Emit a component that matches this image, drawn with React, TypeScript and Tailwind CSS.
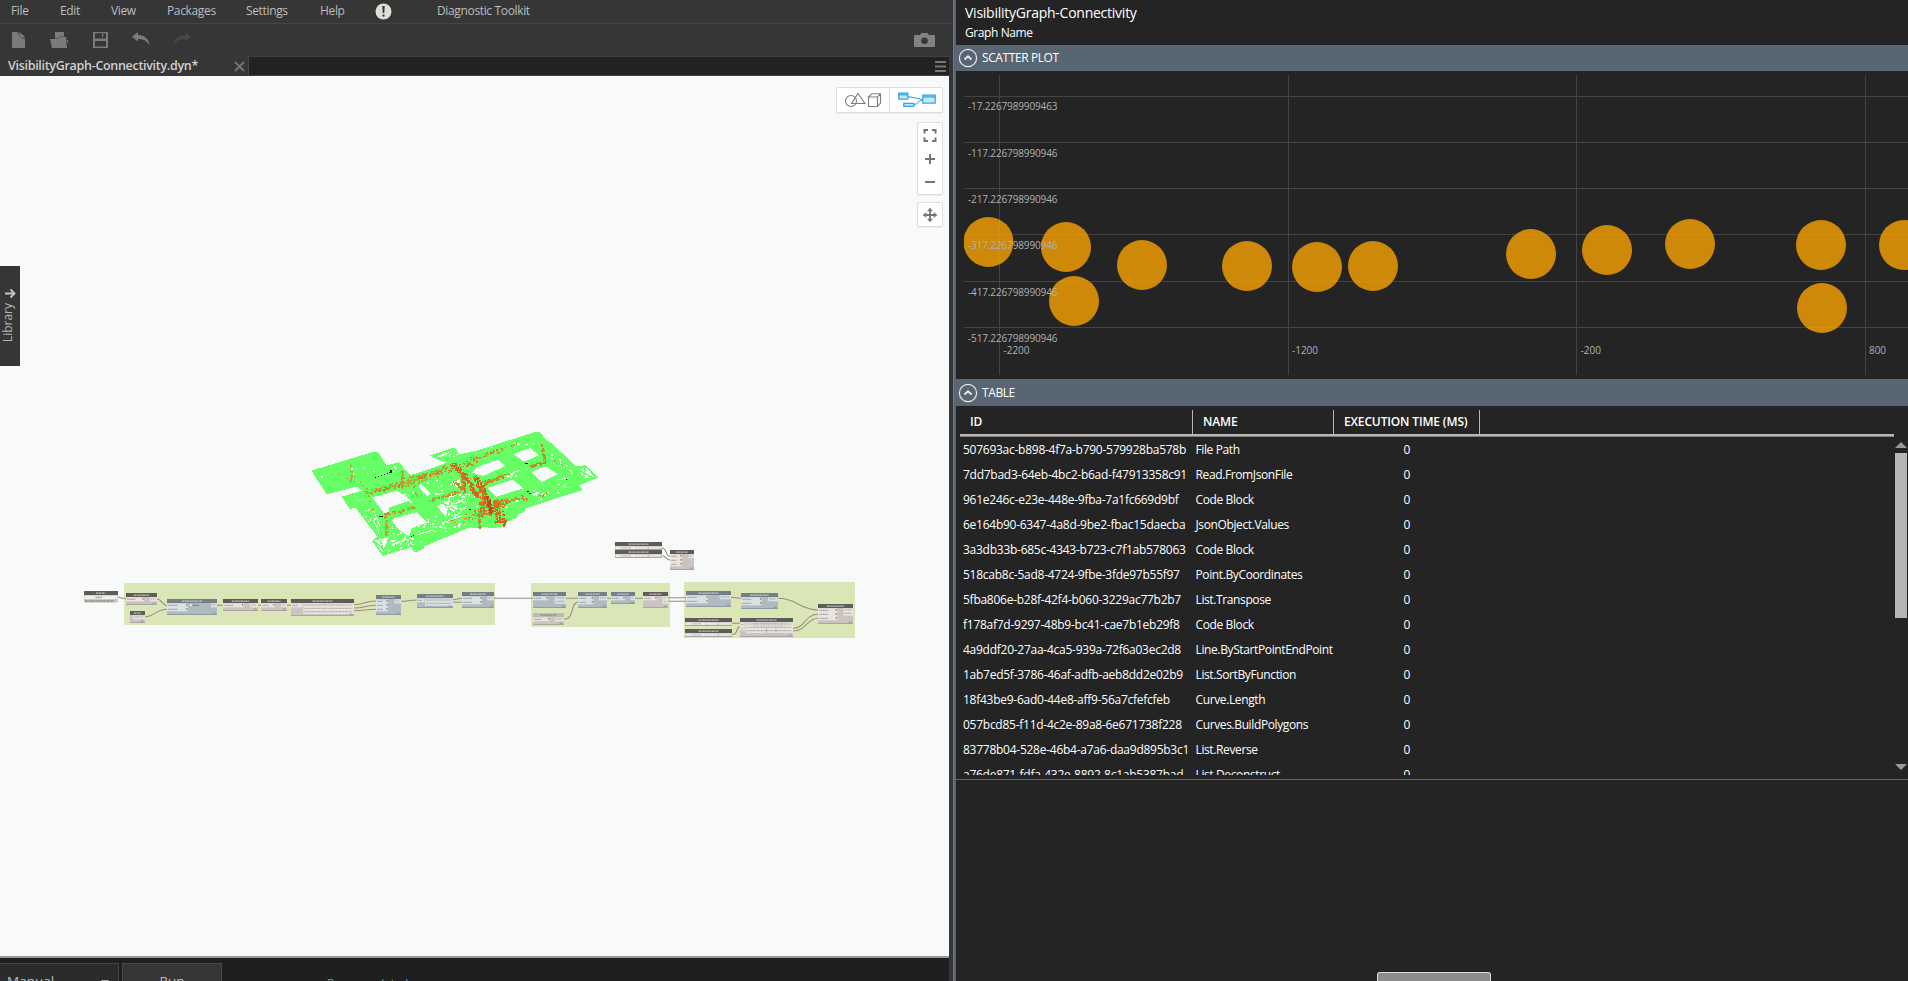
import React from "react";

const MENU = [
  { label: "File", cls: "w-[49px]" },
  { label: "Edit", cls: "w-[51px]" },
  { label: "View", cls: "w-[56px]" },
  { label: "Packages", cls: "w-[79px]" },
  { label: "Settings", cls: "w-[74px]" },
  { label: "Help", cls: "w-[55px]" },
];

const ROWS: [string, string][] = [
  ["507693ac-b898-4f7a-b790-579928ba578b", "File Path"],
  ["7dd7bad3-64eb-4bc2-b6ad-f47913358c91", "Read.FromJsonFile"],
  ["961e246c-e23e-448e-9fba-7a1fc669d9bf", "Code Block"],
  ["6e164b90-6347-4a8d-9be2-fbac15daecba", "JsonObject.Values"],
  ["3a3db33b-685c-4343-b723-c7f1ab578063", "Code Block"],
  ["518cab8c-5ad8-4724-9fbe-3fde97b55f97", "Point.ByCoordinates"],
  ["5fba806e-b28f-42f4-b060-3229ac77b2b7", "List.Transpose"],
  ["f178af7d-9297-48b9-bc41-cae7b1eb29f8", "Code Block"],
  ["4a9ddf20-27aa-4ca5-939a-72f6a03ec2d8", "Line.ByStartPointEndPoint"],
  ["1ab7ed5f-3786-46af-adfb-aeb8dd2e02b9", "List.SortByFunction"],
  ["18f43be9-6ad0-44e8-aff9-56a7cfefcfeb", "Curve.Length"],
  ["057bcd85-f11d-4c2e-89a8-6e671738f228", "Curves.BuildPolygons"],
  ["83778b04-528e-46b4-a7a6-daa9d895b3c1", "List.Reverse"],
  ["a76de871-fdfa-432e-8892-8c1ab5387bad", "List.Deconstruct"],
];

const POINTS = [
  [988.5, 242], [1066, 247], [1074, 301], [1142, 265], [1247, 266], [1317, 267],
  [1373, 266], [1531, 254], [1607, 250], [1690, 244], [1821, 245], [1822, 308], [1904, 245],
];
const H_LINES = [96, 142, 188, 234, 281, 327];
const V_LINES = [999, 1288, 1576, 1865];
const Y_LABELS: [string, number][] = [
  ["-17.2267989909463", 110], ["-117.226798990946", 157], ["-217.226798990946", 203],
  ["-317.226798990946", 249], ["-417.226798990946", 296], ["-517.226798990946", 342],
];
const X_LABELS: [string, number, number][] = [
  ["-2200", 1003.5, 26], ["-1200", 1292, 26], ["-200", 1580.5, 20.5], ["800", 1869, 17],
];

function seeded(seed: number) {
  let s = seed;
  return () => {
    s = (s * 1103515245 + 12345) & 0x7fffffff;
    return s / 0x7fffffff;
  };
}

/* Pixel clusters strewn along a segment: x1, y1, x2, y2, count, spread, colour */
type Band = [number, number, number, number, number, number, string];
function scatter(bands: Band[], seed: number) {
  const rnd = seeded(seed);
  const out: { x: number; y: number; w: number; h: number; c: string }[] = [];
  for (const [x1, y1, x2, y2, n, spread, c] of bands) {
    for (let i = 0; i < n; i++) {
      const t = rnd();
      const x = x1 + (x2 - x1) * t + (rnd() - 0.5) * spread;
      const y = y1 + (y2 - y1) * t + (rnd() - 0.5) * spread;
      out.push({
        x: Math.round(x / 3) * 3,
        y: Math.round(y / 3) * 3,
        w: 3 * (1 + Math.floor(rnd() * 2)),
        h: 3 * (1 + Math.floor(rnd() * 1.6)),
        c,
      });
    }
  }
  return out;
}

const HOLES = scatter(
  [
    [100, 165, 250, 130, 6, 30, "#f8faf9"],
    [340, 190, 360, 250, 8, 30, "#f8faf9"],
    [380, 210, 470, 190, 14, 50, "#f8faf9"],
    [440, 240, 540, 240, 34, 50, "#f8faf9"],
    [300, 340, 440, 300, 24, 40, "#f8faf9"],
    [280, 385, 400, 350, 20, 24, "#f8faf9"],
    [420, 325, 560, 285, 30, 40, "#f8faf9"],
    [440, 105, 510, 100, 6, 12, "#f8faf9"],
    [560, 95, 740, 60, 10, 14, "#f8faf9"],
    [650, 165, 720, 130, 10, 24, "#f8faf9"],
    [710, 215, 840, 200, 18, 30, "#f8faf9"],
    [650, 250, 770, 225, 14, 24, "#f8faf9"],
    [780, 105, 840, 150, 12, 24, "#f8faf9"],
    [190, 215, 260, 320, 18, 28, "#f8faf9"],
    [240, 150, 330, 155, 10, 30, "#f8faf9"],
  ],
  7,
);

const HEAT = scatter(
  [
    [180, 128, 182, 185, 16, 6, "#a3b83c"],
    [150, 165, 215, 195, 8, 30, "#b5a83a"],
    [240, 214, 335, 188, 75, 12, "#b8a832"],
    [255, 212, 335, 190, 30, 8, "#c9812a"],
    [333, 150, 337, 200, 26, 8, "#c9902c"],
    [350, 190, 375, 170, 46, 22, "#b8a832"],
    [370, 180, 455, 150, 70, 20, "#b8a832"],
    [385, 170, 455, 152, 34, 12, "#c98428"],
    [450, 150, 560, 118, 60, 22, "#c08a2c"],
    [540, 118, 672, 74, 30, 9, "#a3a838"],
    [560, 108, 680, 70, 12, 5, "#c08a2c"],
    [285, 280, 288, 345, 44, 8, "#b8a832"],
    [218, 190, 255, 285, 18, 12, "#b8a832"],
    [285, 282, 370, 260, 42, 8, "#b8962f"],
    [370, 190, 380, 230, 10, 8, "#b5a83a"],
    [420, 240, 510, 212, 44, 9, "#b8962f"],
    [495, 185, 520, 212, 42, 14, "#b8962f"],
    [575, 190, 655, 158, 64, 11, "#c98a28"],
    [752, 75, 765, 120, 28, 8, "#b8962f"],
    [718, 138, 765, 122, 26, 7, "#c9812a"],
    [780, 118, 845, 150, 8, 8, "#a3b83c"],
    [620, 245, 700, 228, 44, 12, "#b8962f"],
    [555, 285, 640, 245, 90, 26, "#c98a28"],
    [485, 130, 520, 165, 60, 14, "#cc6a1e"],
    [515, 155, 520, 210, 50, 12, "#cc7422"],
    [525, 165, 560, 230, 100, 12, "#cc6a1e"],
    [555, 168, 605, 275, 150, 15, "#c9621c"],
    [572, 200, 575, 280, 80, 14, "#cc7422"],
    [566, 275, 566, 325, 26, 5, "#c08a2c"],
    [590, 225, 602, 280, 40, 8, "#b84a1a"],
    [615, 240, 625, 300, 70, 14, "#cc6a1e"],
    [610, 250, 655, 240, 40, 12, "#cc7a24"],
    [635, 275, 642, 318, 24, 7, "#c85a1a"],
    [615, 302, 650, 300, 26, 9, "#cc6a1e"],
    [530, 290, 610, 275, 26, 14, "#c08a2c"],
    [470, 310, 540, 290, 10, 20, "#c0a030"],
    [690, 240, 770, 218, 12, 8, "#b8962f"],
  ],
  21,
);

function BuildingModel() {
  return (
    <svg className="absolute left-[290px] top-[344px]" width="330" height="150" viewBox="0 0 990 450" shapeRendering="crispEdges">
      <path
        fill="#66ff66"
        fillRule="evenodd"
        d="M64 152 L255 94 L265 98 L290 136 L327 127 L338 140 L345 148 L362 165 L380 160 L425 145 L470 128 L450 122 L420 106 L492 83 L510 103 L560 92 L735 36 L748 36 L770 60 L785 70 L858 138 L888 136 L923 173 L868 196 L878 210 L840 222 L705 266 L703 275 L684 284 L680 294 L655 303 L635 321 L600 325 L590 320 L566 325 L540 322 L400 380 L402 386 L375 398 L362 382 L278 408 L247 364 L262 350 L196 262 L180 268 L155 230 L216 212 L200 200 L110 223 Z
        M246 232 L322 212 L362 241 L298 262 L296 276 L282 280 Z
        M303 298 L380 276 L410 308 L365 325 L358 350 L325 328 Z
        M565 140 L625 119 L646 138 L580 168 L545 158 Z
        M592 204 L668 179 L700 205 L620 230 Z
        M670 102 L720 84 L748 106 L702 125 Z
        M724 156 L768 139 L803 162 L754 187 Z
        M440 108 L480 96 L470 103 L450 112 Z
        M440 258 L460 250 L482 282 L468 292 Z
        M392 192 L424 222 L412 228 L386 202 Z
        M455 250 L478 240 L505 265 L490 275 Z
        M485 185 L510 178 L514 205 L492 198 Z
        M252 362 L300 350 L278 398 Z
        M300 360 L352 358 L312 375 Z
        M866 150 L888 142 L912 170 L884 176 Z"
      />
      <g stroke="#66ff66" strokeWidth="5" fill="none">
        <path d="M252 362 L290 400 M300 350 L278 400 M270 360 L280 390 M300 372 L350 352 M866 150 L905 172 M886 140 L880 178 M450 245 L500 272 M484 235 L470 290" />
      </g>
      <g stroke="#f8faf9" strokeWidth="3" fill="none">
        <path d="M458 232 L495 226 M500 240 L530 250 M470 262 L520 240 M492 292 L530 258 M380 345 L430 330 M330 375 L350 345 M205 275 L240 330 M250 270 L270 320 M395 195 L420 218 M455 310 L520 285 M268 340 L250 300 M655 165 L690 150 M800 180 L830 175" />
      </g>
      {HOLES.map((p, i) => (
        <rect key={i} x={p.x} y={p.y} width={p.w} height={p.h} fill={p.c} />
      ))}
      {HEAT.map((p, i) => (
        <rect key={i} x={p.x} y={p.y} width={p.w} height={p.h} fill={p.c} />
      ))}
      <g fill="#111">
        <path d="M255 171h3v3h-3zM264 168h3v3h-3zM273 165h3v3h-3zM282 162h3v3h-3zM291 159h3v3h-3zM297 156h9v3h-9zM300 151h5v4h-5zM267 288h12v3h-12zM705 129h9v3h-9zM711 213h6v4h-6zM716 218h6v4h-6zM537 267h6v3h-6zM363 347h3v3h-3zM368 345h3v3h-3zM828 177h3v3h-3z" />
      </g>
    </svg>
  );
}

type NodeSpec = { x: number; y: number; w: number; h: number; t?: "dark" | "blue" | "light" | "slider"; ins?: number; outs?: number; inW?: number; outW?: number };
/* Coordinates are in thirds of a pixel, measured from the graph's own corner. */
const NODES: NodeSpec[] = [
  { x: 168, y: 30, w: 93, h: 35, ins: 1, outs: 1, inW: 54, outW: 22 },
  { x: 180, y: 84, w: 45, h: 35, ins: 0, outs: 1, outW: 36 },
  { x: 291, y: 48, w: 150, h: 47, t: "blue", ins: 2, outs: 1, inW: 62, outW: 18 },
  { x: 459, y: 48, w: 105, h: 35, ins: 1, outs: 1, inW: 62, outW: 24 },
  { x: 573, y: 48, w: 78, h: 35, ins: 1, outs: 1, inW: 42, outW: 18 },
  { x: 663, y: 48, w: 189, h: 50, ins: 1, outs: 3, inW: 34, outW: 152 },
  { x: 918, y: 36, w: 75, h: 59, t: "blue", ins: 3, outs: 1, inW: 36, outW: 20 },
  { x: 1041, y: 33, w: 108, h: 41, t: "blue", ins: 1, outs: 2, inW: 22, outW: 84 },
  { x: 1176, y: 27, w: 96, h: 47, t: "blue", ins: 2, outs: 1, inW: 60, outW: 20 },
  { x: 1389, y: 27, w: 99, h: 47, t: "blue", ins: 1, outs: 2, inW: 46, outW: 34 },
  { x: 1389, y: 90, w: 93, h: 35, t: "light", ins: 1, outs: 1, inW: 50, outW: 28 },
  { x: 1524, y: 27, w: 87, h: 47, t: "blue", ins: 2, outs: 1, inW: 46, outW: 24 },
  { x: 1623, y: 27, w: 72, h: 35, t: "blue", ins: 1, outs: 1, inW: 42, outW: 14 },
  { x: 1719, y: 27, w: 75, h: 47, ins: 1, outs: 2, inW: 42, outW: 16 },
  { x: 1848, y: 24, w: 135, h: 47, t: "blue", ins: 2, outs: 1, inW: 66, outW: 34 },
  { x: 2013, y: 30, w: 111, h: 47, t: "blue", ins: 2, outs: 1, inW: 62, outW: 30 },
  { x: 2244, y: 63, w: 105, h: 59, ins: 3, outs: 2, inW: 58, outW: 28 },
  { x: 2010, y: 105, w: 159, h: 56, ins: 2, outs: 3, inW: 14, outW: 142 },
  { x: 1845, y: 105, w: 141, h: 23, t: "slider" },
  { x: 1845, y: 138, w: 141, h: 23, t: "slider" },
  { x: 1635, y: -123, w: 141, h: 23, t: "slider" },
  { x: 1635, y: -99, w: 141, h: 23, t: "slider" },
  { x: 1800, y: -99, w: 72, h: 59, ins: 3, outs: 1, inW: 36, outW: 16 },
];

function GraphNode({ n }: { n: NodeSpec }) {
  const t = n.t ?? "dark";
  const head = t === "blue" ? "#747e85" : t === "light" ? "#bdbab5" : "#5d5c58";
  const body = t === "blue" ? "#afbbc0" : t === "slider" ? "#d5d1cc" : "#cac3bf";
  const slot = t === "blue" ? "#dae1e3" : "#e9e4e0";
  const mid = n.w / 2;
  const tw = Math.min(n.w * 0.5, 60);
  const rows = (count: number) => Array.from({ length: count }, (_, i) => 15 + i * 12);
  return (
    <g transform={`translate(${n.x} ${n.y})`}>
      <rect width={n.w} height={n.h} fill={body} />
      <rect width={n.w} height="12" fill={head} />
      <path d={`M${mid - tw / 2} 6.5 H${mid + tw / 2}`} stroke={t === "light" ? "#7d7a76" : "#eceae6"} strokeWidth="3.5" strokeDasharray="7 1.5 4 1" opacity="0.7" />
      {t === "slider" ? (
        <>
          <rect x="3" y="14" width="12" height="7" fill="#f0eeea" />
          <rect x="18" y="14" width="42" height="7" fill="#eeebe6" />
          <path d="M22 17.5 h26" stroke="#8e8b87" strokeWidth="2" strokeDasharray="3 1" />
          <rect x="62" y="15" width="70" height="5" fill="#ece8e3" />
          <rect x="132" y="13" width="9" height="8" fill="#dbd8d4" />
          <path d="M100 14 v7" stroke="#aaa6a0" strokeWidth="2" />
        </>
      ) : (
        <>
          {(n.ins ?? 0) > 0 && <rect x="0" y="13" width={n.inW ?? 20} height={(n.ins ?? 0) * 12} fill={slot} />}
          {rows(n.ins ?? 0).map((y, i) => (
            <g key={i}>
              <path d={`M4 ${y + 4} h${Math.max(6, (n.inW ?? 20) * 0.45)}`} stroke="#85837f" strokeWidth="2.5" strokeDasharray="4 1.5" />
              {(n.inW ?? 0) > 35 && <rect x={(n.inW ?? 20) - 5} y={y} width="4" height="5" fill="#8b8b60" />}
            </g>
          ))}
          <rect x={n.w - (n.outW ?? 16)} y="13" width={n.outW ?? 16} height={(n.outs ?? 1) * 10 + 2} fill={slot} />
          {rows(n.outs ?? 1).map((y, i) => (
            <path key={i} d={`M${n.w - (n.outW ?? 16) + 3} ${y + 3 - i * 2} h${(n.outW ?? 16) - 8}`} stroke="#94918c" strokeWidth="2.2" strokeDasharray="5 1.5 3 1" />
          ))}
          <path d={`M${n.w - 13} ${n.h - 4.5} h9`} stroke="#7d7b78" strokeWidth="2" />
        </>
      )}
      <rect y={n.h - 2} width={n.w} height="3" fill={t === "blue" ? "#929da2" : "#aba5a2"} />
    </g>
  );
}

function NodeGraph() {
  return (
    <svg className="absolute left-[70px] top-[457px]" width="800" height="110" viewBox="0 -150 2400 330">
      <g fill="#dbe6b6">
        <rect x="162" y="0" width="1113" height="126" />
        <rect x="1383" y="0" width="417" height="132" />
        <rect x="1842" y="-3" width="513" height="168" />
      </g>
      <g fill="none" stroke="#9a8c82" strokeWidth="3.2">
        <path d="M144 43 C156 43 154 47 168 47 M261 48 C275 48 278 68 291 68 M225 101 C255 101 258 79 291 79 M441 67 H459 M564 67 H573 M651 67 H663 M852 65 C880 65 885 54 918 54 M852 75 C880 75 890 67 918 67 M852 83 C880 83 890 79 918 79 M993 55 C1010 55 1020 51 1041 51 M1149 50 L1176 46 M1149 58 H1176 M1272 46 H1389 M1488 46 H1524 M1482 109 C1515 109 1500 58 1524 57 M1611 46 H1623 M1695 46 H1719 M1794 44 H1848 M1794 55 H1848 M1983 43 L2013 46 M2124 46 C2180 46 2190 81 2244 81 M1986 121 H2010 M1986 155 C2008 155 1996 131 2010 131 M2169 136 C2205 136 2205 94 2244 94 M2169 144 C2210 144 2210 106 2244 106 M1776 -104 C1792 -104 1786 -80 1800 -80 M1776 -82 C1788 -82 1788 -69 1800 -69" />
      </g>
      {NODES.map((n, i) => (
        <GraphNode key={i} n={n} />
      ))}
      <g transform="translate(42 24)">
        <rect width="102" height="35" fill="#cbc7c3" />
        <rect width="102" height="12" fill="#5d5c58" />
        <path d="M36 6.5 h28" stroke="#eceae6" strokeWidth="3.5" strokeDasharray="7 1.5" opacity="0.7" />
        <rect x="2" y="14" width="98" height="10" fill="#f1eeeb" />
        <path d="M34 19 h20" stroke="#8a8884" strokeWidth="2.5" />
        <path d="M3 30 h88" stroke="#6f6d6a" strokeWidth="3" strokeDasharray="6 1 3 1" />
      </g>
      <g strokeWidth="2.2" fill="none">
        <path d="M2050 121 h95 M2050 129 h95" stroke="#9ab7cf" strokeDasharray="10 2 5 3" />
        <path d="M2090 137 v12 M2118 137 v12" stroke="#a39a76" />
        <rect x="360" y="64" width="5" height="5" fill="#fff" />
        <path d="M368 67 h18" stroke="#54606a" />
      </g>
    </svg>
  );
}

function Toolbar() {
  return (
    <div className="flex h-[32px] shrink-0 items-center bg-[#363636] pl-3 pr-[18px] text-[#7b7b7b]">
      <svg width="13" height="16" viewBox="0 0 13 16" className="fill-current">
        <path d="M0 0 H6 L13 6 V16 H0 Z" />
        <path d="M7 0 L13 5 L9.5 5 Z" fill="#8a8a8a" />
        <path d="M5.5 0 L9 5.5 L13 6.5" stroke="#4a4a4a" fill="none" />
      </svg>
      <svg width="19" height="16" viewBox="0 0 19 16" className="ml-[25px] fill-current">
        <path d="M5 0 H14 V4.5 H10 L8 6.5 H5 Z" />
        <path d="M0 7 H8 L10 5 H16.5 L16 9 L17 16 H2 Z" />
        <path d="M16.5 8 h2 l-1.5 4 z" />
      </svg>
      <svg width="15" height="16" viewBox="0 0 15 16" className="ml-[24px] fill-current">
        <path fillRule="evenodd" d="M0 0 H15 V16 H0 Z M2 1.3 V6.6 H13 V1.3 Z M2 9 V14.6 H13 V9 Z" />
        <rect x="9" y="1.6" width="1.3" height="3.4" />
      </svg>
      <svg width="18" height="14" viewBox="0 0 18 14" className="ml-[24px] mt-[-2px] fill-current">
        <path d="M0 4.8 L6 0 V3 C12 3 17 6.5 17.5 13.5 C15 9 11.5 7 6 7 V9.5 Z" />
      </svg>
      <svg width="18" height="14" viewBox="0 0 18 14" className="ml-[23px] mt-[-2px] fill-[#474747]">
        <path d="M18 4.8 L12 0 V3 C6 3 1 6.5 .5 13.5 C3 9 6.5 7 12 7 V9.5 Z" />
      </svg>
      <svg width="21" height="14" viewBox="0 0 21 14" className="ml-auto fill-[#828282]">
        <path d="M0 3 Q0 2 1 2 H6 L7.5 0 H13.5 L15 2 H20 Q21 2 21 3 V13 Q21 14 20 14 H1 Q0 14 0 13 Z" />
        <circle cx="10.5" cy="7.7" r="3.3" fill="#363636" />
      </svg>
    </div>
  );
}

function CanvasControls() {
  const card = "rounded-[2px] border border-[#e0ded9] bg-white shadow-[0_1px_1px_rgba(0,0,0,0.06)]";
  return (
    <div className="absolute right-[6px] top-[11px] flex flex-col items-end">
      <div className={`${card} flex h-[26px] w-[107px]`}>
        <div className="flex w-[53px] items-center justify-center border-r border-[#e0ded9]">
          <svg width="38" height="16" viewBox="0 0 38 16" fill="none" stroke="#7d7d7d" strokeWidth="1.1">
            <circle cx="7" cy="9" r="5.5" />
            <path d="M14 1.5 L21 11.5 H7.5 Z" />
            <path d="M24.5 5 H33.5 V14.5 H24.5 Z M24.5 5 L28 1.7 H36.5 V11 L33.5 14.5 M33.5 5 L36.5 1.7" />
          </svg>
        </div>
        <div className="flex flex-1 items-center justify-center pl-px">
          <svg width="38" height="16" viewBox="0 0 38 16" fill="#c5e9f9" stroke="#2d9fd9" strokeWidth="1.2">
            <path d="M10 4.5 L24.5 7.5 M16 12.5 L18.5 12 L20.5 9.5 L24.5 8" fill="none" strokeWidth="1" />
            <rect x=".8" y="1.1" width="9" height="6" />
            <path d="M.8 2.8 h9" />
            <rect x="24.8" y="3.1" width="12.4" height="8" />
            <path d="M24.8 4.9 h12.4" />
            <rect x="5.8" y="11.3" width="10" height="3" />
          </svg>
        </div>
      </div>
      <div className={`${card} mt-[9px] flex h-[73px] w-[26px] flex-col items-center`}>
        <svg width="24" height="71" viewBox="0 0 24 71" fill="none" stroke="#757575" strokeWidth="2">
          <path d="M6.5 10.5 V7 H10 M14 7 H17.500 V10.500 M17.500 14.500 V18 H14 M10 18 H6.500 V14.500" />
          <path d="M12 31 V41 M7 36 H17 M7 59 H17" />
        </svg>
      </div>
      <div className={`${card} mt-[7px] flex h-[25px] w-[26px] items-center justify-center`}>
        <svg width="16" height="16" viewBox="0 0 16 16" fill="#757575" stroke="#757575">
          <path d="M8 2.5 V13.5 M2.5 8 H13.5" strokeWidth="1.8" />
          <path d="M8 1 L10.3 4 H5.7 Z M8 15 L10.3 12 H5.7 Z M1 8 L4 5.7 V10.3 Z M15 8 L12 5.7 V10.3 Z" strokeWidth=".6" />
        </svg>
      </div>
    </div>
  );
}

function SectionHeader({ title, cls }: { title: string; cls: string }) {
  return (
    <div className={`flex shrink-0 items-center bg-[#586572] pl-[2px] text-white ${cls}`}>
      <svg width="20" height="20" viewBox="0 0 20 20" fill="none" stroke="#e9ecee">
        <circle cx="10" cy="10" r="8.6" strokeWidth="1.2" />
        <path d="M6.5 11.6 L10 8.3 L13.5 11.6" strokeWidth="2" />
      </svg>
      <span className="ml-[4px] text-[12px] tracking-[-0.4px]">{title}</span>
    </div>
  );
}

function ScatterPlot() {
  return (
    <svg className="block shrink-0" width="952" height="308" viewBox="956 71 952 308" fontFamily="'Open Sans','Noto Sans',sans-serif">
      <clipPath id="plot-area">
        <rect x="964" y="71" width="944" height="308" />
      </clipPath>
      <g fill="#434343" shapeRendering="crispEdges">
        {H_LINES.map((y) => <rect key={y} x="964" y={y} width="944" height="1" />)}
        {V_LINES.map((x) => <rect key={x} x={x} y="75" width="1" height="300" />)}
      </g>
      <g clipPath="url(#plot-area)" fill="#ffa500" fillOpacity="0.78">
        {POINTS.map(([x, y], i) => <circle key={i} cx={x} cy={y} r="25" />)}
      </g>
      <g fill="#b0b0b0" fontSize="10">
        {Y_LABELS.map(([t, y]) => <text key={t} x="968" y={y} textLength="89.5">{t}</text>)}
        {X_LABELS.map(([t, x, w]) => <text key={t} x={x} y="354" textLength={w}>{t}</text>)}
      </g>
    </svg>
  );
}

function NodeTable() {
  return (
    <div className="flex h-[374px] shrink-0 flex-col border-b border-[#586572] text-white">
      <div className="mt-[4px] ml-[4px] mb-px flex h-[26px] w-[934px] shrink-0 border-b-2 border-[#b9b5b4] text-[12px] font-semibold tracking-[-0.15px] shadow-[0_1px_0_#7f7c7c]">
        <div className="flex w-[233px] items-center border-r border-[#b9b5b4] pl-[10px]">ID</div>
        <div className="flex w-[141px] items-center border-r border-[#b9b5b4] pl-[10px]">NAME</div>
        <div className="flex w-[146px] items-center border-r border-[#b9b5b4] pl-[10px] whitespace-nowrap">EXECUTION TIME (MS)</div>
      </div>
      <div className="flex min-h-0 flex-1 pb-[4px]">
        <div className="flex-1 overflow-hidden text-[12px] leading-[25px]">
          {ROWS.map(([id, name]) => (
            <div key={id} className="flex h-[25px] pl-[7px]">
              <span className="w-[232.5px] whitespace-nowrap tracking-[-0.26px]">{id}</span>
              <span className="w-[141px] whitespace-nowrap tracking-[-0.38px]">{name}</span>
              <span className="w-[141px] text-center">0</span>
            </div>
          ))}
        </div>
        <div className="flex w-[13px] flex-col items-start pt-[5px]">
          <svg width="12" height="6" className="shrink-0 fill-[#999]"><path d="M0 6 L6 0 L12 6 Z" /></svg>
          <div className="mt-[5px] h-[165px] w-[12px] shrink-0 bg-[#b9b5b4]" />
          <svg width="12" height="6" className="mt-auto mb-[5px] shrink-0 fill-[#999]"><path d="M0 0 H12 L6 6 Z" /></svg>
        </div>
      </div>
    </div>
  );
}

export default function App() {
  return (
    <div className="flex h-[981px] w-[1908px] overflow-hidden bg-[#363636] font-['Open_Sans','Noto_Sans',sans-serif]">
      <main className="flex w-[953px] flex-col">
        <nav className="flex h-[23px] shrink-0 items-center pl-[11px] text-[12px] tracking-[-0.35px] text-[#bdbdbd]">
          {MENU.map((m) => (
            <span key={m.label} className={`${m.cls} shrink-0 pb-px`}>{m.label}</span>
          ))}
          <svg width="17" height="17" viewBox="0 0 17 17" className="shrink-0">
            <circle cx="8.5" cy="8.5" r="8" fill="#dfded6" />
            <path d="M7.3 3 H9.7 L9.3 10 H7.7 Z M7.5 11.5 H9.5 V13.5 H7.5 Z" fill="#363636" />
          </svg>
          <span className="ml-[45px] pb-px whitespace-nowrap">Diagnostic Toolkit</span>
        </nav>
        <div className="h-px shrink-0 bg-[#454545]" />
        <Toolbar />
        <div className="flex h-[20px] shrink-0">
          <div className="flex w-[249px] items-center justify-between border-r border-[#474747] pl-[8px] pr-[3px] text-[#d0d0d0]">
            <span className="text-[12.5px] font-semibold tracking-[-0.3px] whitespace-nowrap">VisibilityGraph-Connectivity.dyn*</span>
            <svg width="11" height="11" viewBox="0 0 11 11" stroke="#77736e" strokeWidth="1.8"><path d="M1 1 L10 10 M10 1 L1 10" /></svg>
          </div>
          <div className="flex w-[700px] items-center justify-end border-y border-t-[#3f3f3f] border-b-[#3f3f3f] bg-[#222] pr-[3px]">
            <svg width="11" height="11" viewBox="0 0 11 11" fill="#777"><path d="M0 0 H11 V2 H0 Z M0 4.5 H11 V6.5 H0 Z M0 9 H11 V11 H0 Z" /></svg>
          </div>
        </div>
        <div className="relative h-[880px] w-[949px] shrink-0 bg-[#f8faf9]">
          <BuildingModel />
          <NodeGraph />
          <CanvasControls />
          <div className="absolute left-0 top-[190px] flex h-[100px] w-[20px] flex-col items-center bg-[#363636] pt-[22px] text-[#b5b5b5]">
            <svg width="11" height="11" viewBox="0 0 11 11" className="shrink-0" fill="none" stroke="#c4c4c4" strokeWidth="1.8"><path d="M0 5.5 H9.5 M5.5 1.5 L9.5 5.5 L5.5 9.5" /></svg>
            <span className="mt-[4px] mr-[4px] rotate-180 text-[12px] leading-[16px] [writing-mode:vertical-rl]">Library</span>
          </div>
        </div>
        <div className="flex h-[25px] w-[949px] shrink-0 items-start overflow-hidden border-t-2 border-[#979797] bg-[#1f1f1f] text-[#bdbdbd]">
          <div className="mt-[5px] flex h-[40px] w-[119px] shrink-0 items-start justify-between border-t border-r border-[#454545] bg-[#2b2b2b] pl-[7px] pr-[9px] pt-[6px]">
            <span className="text-[13.5px] leading-[22px]">Manual</span>
            <svg width="8" height="5" className="mt-[10px] fill-[#aaa]"><path d="M0 0 H8 L4 5 Z" /></svg>
          </div>
          <div className="mt-[5px] ml-[3px] flex h-[40px] w-[100px] shrink-0 justify-center border border-[#474747] bg-[#363636] pt-[6px] text-[13.5px] leading-[22px]">Run</div>
          <span className="mt-[16px] ml-[105px] text-[11.5px] leading-[18px] text-[#8f8f8f] whitespace-nowrap">Run completed.</span>
        </div>
      </main>

      <aside className="flex w-[955px] flex-col border-l border-[#777] bg-[#242424]">
        <div className="flex min-h-0 flex-1 flex-col border-l-2 border-[#586572]">
          <div className="h-[45px] shrink-0 pl-[9px] text-white">
            <div className="pt-[4px] text-[14px] leading-[18px] tracking-[-0.25px]">VisibilityGraph-Connectivity</div>
            <div className="pt-[2px] text-[12px] leading-[17px] tracking-[-0.4px]">Graph Name</div>
          </div>
          <SectionHeader title="SCATTER PLOT" cls="h-[26px]" />
          <ScatterPlot />
          <SectionHeader title="TABLE" cls="h-[27px]" />
          <NodeTable />
          <div className="flex flex-1 items-end">
            <div className="ml-[421px] h-[9px] w-[114px] rounded-t-[3px] border border-b-0 border-[#dedcd8] bg-[#8c8c8a]" />
          </div>
        </div>
      </aside>
    </div>
  );
}
